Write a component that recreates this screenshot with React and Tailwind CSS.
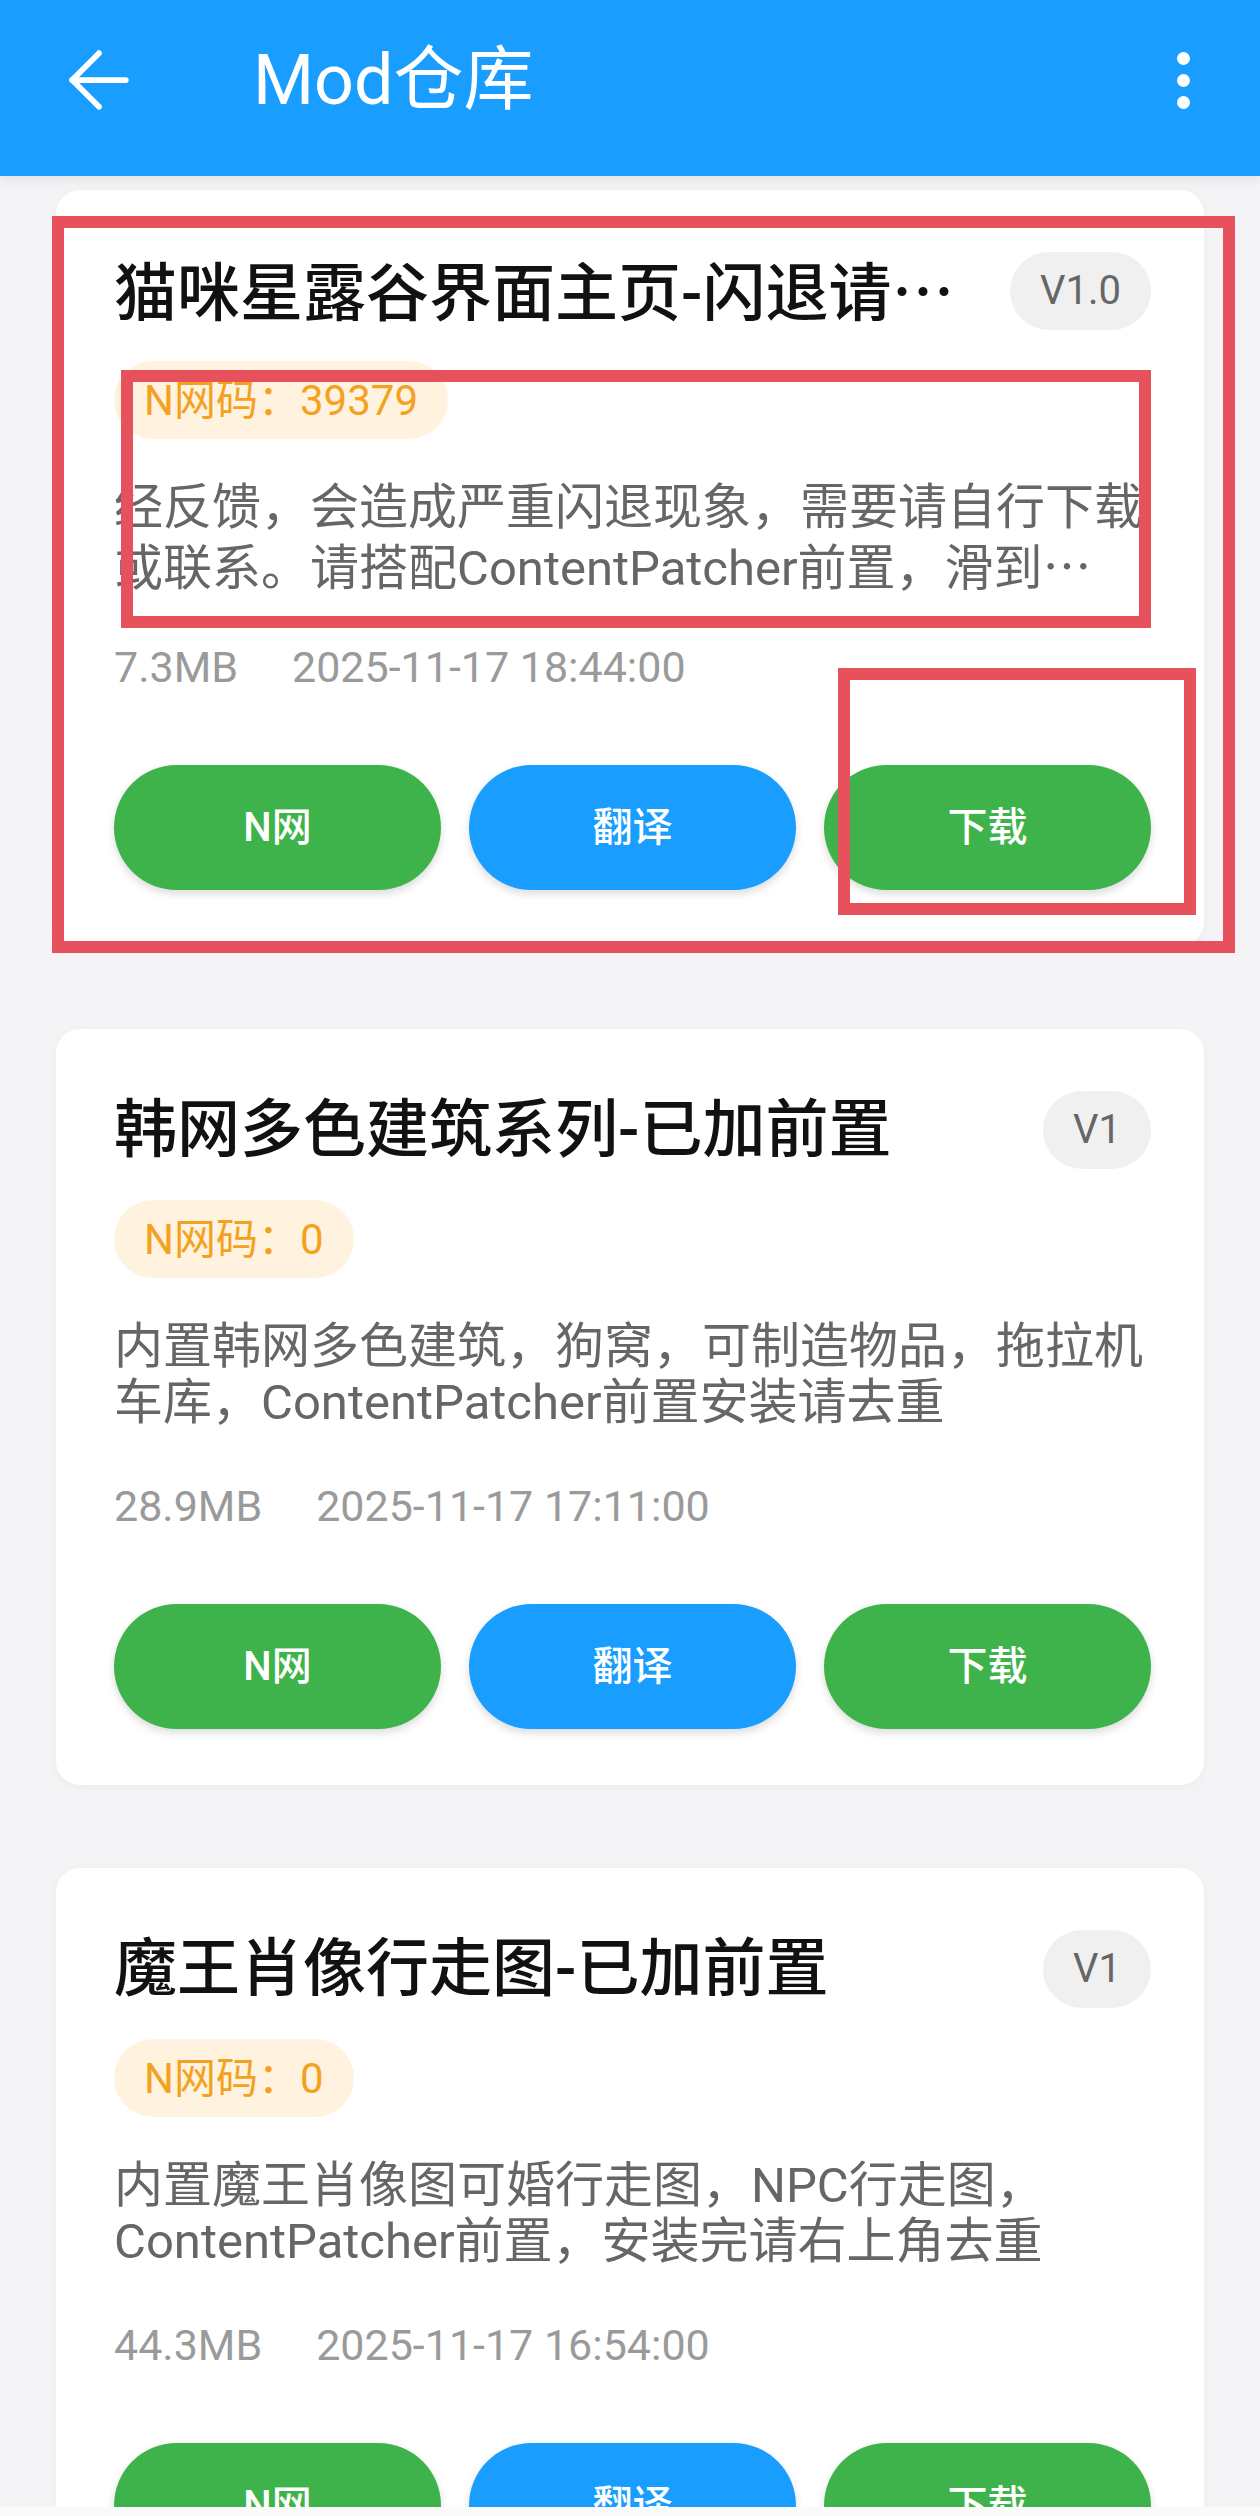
import React from "react";
import { ArrowLeft } from "lucide-react";

const mods = [
  {
    title: "猫咪星露谷界面主页-闪退请",
    titleMore: true,
    ver: "V1.0",
    code: "39379",
    desc: "经反馈，会造成严重闪退现象，需要请自行下载或联系。请搭配ContentPatcher前置，滑到",
    descMore: true,
    size: "7.3MB",
    date: "2025-11-17 18:44:00",
  },
  {
    title: "韩网多色建筑系列-已加前置",
    ver: "V1",
    code: "0",
    desc: "内置韩网多色建筑，狗窝，可制造物品，拖拉机车库，ContentPatcher前置安装请去重",
    size: "28.9MB",
    date: "2025-11-17 17:11:00",
  },
  {
    title: "魔王肖像行走图-已加前置",
    ver: "V1",
    code: "0",
    desc: "内置魔王肖像图可婚行走图，NPC行走图，ContentPatcher前置，安装完请右上角去重",
    size: "44.3MB",
    date: "2025-11-17 16:54:00",
  },
];

function Card({ m }) {
  return (
    <div className="bg-white rounded-[24px] shadow-[0_2px_10px_rgba(0,0,0,0.04)] pt-[62px] pb-[56px] pl-[58px] pr-[53px]">
      <div className="flex items-center h-[78px] gap-[30px]">
        <div className="flex-1 min-w-0 whitespace-nowrap overflow-hidden text-[63px] leading-[78px] font-medium text-[#111111]">
          {m.title}
          {m.titleMore && <span className="font-['Noto_Sans_CJK_SC',sans-serif]">…</span>}
        </div>
        <div className="shrink-0 h-[78px] px-[30px] rounded-full bg-[#f0f0f0] text-[#666666] text-[40px] flex items-center">
          {m.ver}
        </div>
      </div>
      <div className="mt-[31px] flex">
        <div className="h-[78px] px-[30px] rounded-full bg-[#fff3e0] text-[#f4a11f] text-[42px] flex items-center">
          N网码：{m.code}
        </div>
      </div>
      <div className="mt-[41px] text-[49px] leading-[56px] text-[#666666] h-[112px] overflow-hidden">
        {m.desc}
        {m.descMore && <span className="font-['Noto_Sans_CJK_SC',sans-serif]">…</span>}
      </div>
      <div className="mt-[50px] h-[50px] flex items-center text-[43px] text-[#9a9a9a]">
        <span>{m.size}</span>
        <span className="ml-[54px]">{m.date}</span>
      </div>
      <div className="mt-[73px] grid grid-cols-3 gap-[28px]">
        <button className="h-[125px] rounded-full bg-[#3fb34b] text-white text-[40px] font-medium shadow-[0_4px_8px_rgba(0,0,0,0.14)]">
          N网
        </button>
        <button className="h-[125px] rounded-full bg-[#199dff] text-white text-[40px] font-medium shadow-[0_4px_8px_rgba(0,0,0,0.14)]">
          翻译
        </button>
        <button className="h-[125px] rounded-full bg-[#3fb34b] text-white text-[40px] font-medium shadow-[0_4px_8px_rgba(0,0,0,0.14)]">
          下载
        </button>
      </div>
    </div>
  );
}

export default function App() {
  return (
    <div className="relative w-[1260px] h-[2516px] overflow-hidden bg-[#f4f4f6] font-['Roboto','Noto_Sans_CJK_SC',sans-serif]">
      <header className="relative z-10 h-[176px] bg-[#199dff] shadow-[0_4px_10px_rgba(0,0,0,0.08)]">
        <div className="h-[160px] flex items-center text-white">
          <ArrowLeft size={92} strokeWidth={1.5} className="ml-[53px] shrink-0" />
          <div className="ml-[108px] text-[70px] leading-none">Mod仓库</div>
          <div className="ml-auto mr-[70px] flex flex-col items-center gap-[9px]">
            <span className="w-[13px] h-[13px] rounded-full bg-white" />
            <span className="w-[13px] h-[13px] rounded-full bg-white" />
            <span className="w-[13px] h-[13px] rounded-full bg-white" />
          </div>
        </div>
      </header>

      <main className="px-[56px] pt-[14px] flex flex-col gap-[83px]">
        {mods.map((m, i) => (
          <Card key={i} m={m} />
        ))}
      </main>

      {/* annotation boxes */}
      <div className="absolute left-[52px] top-[216px] w-[1183px] h-[737px] border-[12px] border-[#e6515b] pointer-events-none" />
      <div className="absolute left-[121px] top-[370px] w-[1030px] h-[258px] border-[12px] border-[#e6515b] pointer-events-none" />
      <div className="absolute left-[838px] top-[668px] w-[358px] h-[247px] border-[12px] border-[#e6515b] pointer-events-none" />

      <div className="absolute left-0 bottom-0 w-full h-[9px] bg-[#fafafa]" />
    </div>
  );
}
